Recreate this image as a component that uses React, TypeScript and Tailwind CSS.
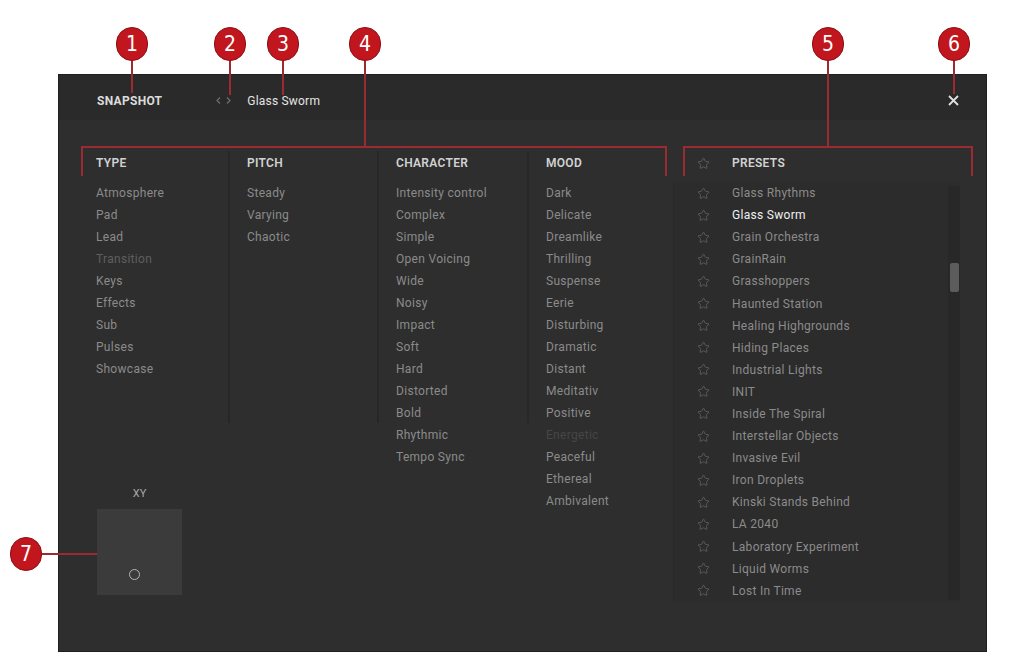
import { Star } from "lucide-react";

const type = ["Atmosphere", "Pad", "Lead", "Transition", "Keys", "Effects", "Sub", "Pulses", "Showcase"];
const pitch = ["Steady", "Varying", "Chaotic"];
const character = [
  "Intensity control",
  "Complex",
  "Simple",
  "Open Voicing",
  "Wide",
  "Noisy",
  "Impact",
  "Soft",
  "Hard",
  "Distorted",
  "Bold",
  "Rhythmic",
  "Tempo Sync",
];
const mood = [
  "Dark",
  "Delicate",
  "Dreamlike",
  "Thrilling",
  "Suspense",
  "Eerie",
  "Disturbing",
  "Dramatic",
  "Distant",
  "Meditativ",
  "Positive",
  "Energetic",
  "Peaceful",
  "Ethereal",
  "Ambivalent",
];
const presets = [
  "Glass Rhythms",
  "Glass Sworm",
  "Grain Orchestra",
  "GrainRain",
  "Grasshoppers",
  "Haunted Station",
  "Healing Highgrounds",
  "Hiding Places",
  "Industrial Lights",
  "INIT",
  "Inside The Spiral",
  "Interstellar Objects",
  "Invasive Evil",
  "Iron Droplets",
  "Kinski Stands Behind",
  "LA 2040",
  "Laboratory Experiment",
  "Liquid Worms",
  "Lost In Time",
];
const dim = ["Transition", "Energetic"];

const font = { fontFamily: "Roboto, 'Liberation Sans', Arial, sans-serif" };

function TagColumn({ title, items, first, width }: { title: string; items: string[]; first?: boolean; width: string }) {
  return (
    <div className={`${width} h-[272px] ${first ? "" : "border-l-2 border-[#272727]"} pl-[17px]`}>
      <div className="h-[24px] flex items-center text-[12px] font-semibold tracking-[0.3px] text-[#d2d2d2]">{title}</div>
      <div className="mt-[7px] flex flex-col">
        {items.map((t) => (
          <div
            key={t}
            className={`h-[22px] flex items-center text-[12px] tracking-[0.3px] whitespace-nowrap ${
              t === "Energetic" ? "text-[#464646]" : dim.includes(t) ? "text-[#5f5f5f]" : "text-[#8b8b8b]"
            }`}
          >
            {t}
          </div>
        ))}
      </div>
    </div>
  );
}

function Callout({ n, x, y }: { n: number; x: number; y: number }) {
  return (
    <div
      className="absolute w-[32px] h-[34px] -ml-[16px] -mt-[17px] rounded-full bg-[#c1161e] border border-[#8f0f15] flex items-center justify-center text-white text-[21px] leading-none"
      style={{ left: x, top: y, fontFamily: "'Liberation Sans Narrow', 'DejaVu Sans Condensed', Roboto, sans-serif" }}
    >
      {n}
    </div>
  );
}

export default function App() {
  return (
    <div className="relative w-[1024px] h-[662px] bg-white overflow-hidden" style={font}>
      <div className="pt-[74px] pl-[58px]">
        <div className="w-[929px] h-[578px] flex flex-col bg-[#2e2e2e] border border-[#1f1f1f]">
          {/* header */}
          <div className="h-[45px] flex items-center pt-[6px] pl-[38px] pr-[27px] bg-[#2a2a2a]">
            <span className="text-[12px] font-bold tracking-[0.3px] text-[#dcdcdc]">SNAPSHOT</span>
            <div className="ml-[54px] flex items-center gap-[5px]">
              <svg width="5" height="7" viewBox="0 0 5 7">
                <path d="M4 0.5 L1 3.5 L4 6.5" fill="none" stroke="#6e6e6e" strokeWidth="1.2" />
              </svg>
              <svg width="5" height="7" viewBox="0 0 5 7">
                <path d="M1 0.5 L4 3.5 L1 6.5" fill="none" stroke="#6e6e6e" strokeWidth="1.2" />
              </svg>
            </div>
            <span className="ml-[16px] text-[12px] tracking-[0.2px] text-[#e4e4e4]">Glass Sworm</span>
            <div className="ml-auto">
              <svg width="11" height="11" viewBox="0 0 11 11">
                <path d="M1 1 L10 10 M10 1 L1 10" stroke="#e0e0e0" strokeWidth="1.8" />
              </svg>
            </div>
          </div>

          {/* body */}
          <div className="flex pt-[31px]">
            <div className="flex flex-col pl-[20px]">
              <div className="flex">
                <TagColumn title="TYPE" items={type} first width="w-[149px]" />
                <TagColumn title="PITCH" items={pitch} width="w-[149px]" />
                <TagColumn title="CHARACTER" items={character} width="w-[150px]" />
                <TagColumn title="MOOD" items={mood} width="w-[138px]" />
              </div>
              <div className="mt-[64px] ml-[18px] w-[85px] flex flex-col items-center">
                <div className="h-[14px] flex items-center text-[11px] text-[#a8a8a8]">XY</div>
                <div className="relative mt-[8px] w-[85px] h-[86px] bg-[#3b3b3b]">
                  <div className="absolute left-[32px] top-[60px] w-[11px] h-[11px] rounded-full border-[1.5px] border-[#b5b5b5]" />
                </div>
              </div>
            </div>

            <div className="ml-[8px] w-[287px] flex flex-col">
              <div className="h-[24px] flex items-center pl-[12px]">
                <div className="w-[36px] flex justify-center">
                  <Star size={13} strokeWidth={1.4} color="#6a6a6a" />
                </div>
                <span className="pl-[11px] text-[12px] font-semibold tracking-[0.3px] text-[#d2d2d2]">PRESETS</span>
              </div>
              <div className="mt-[7px] flex bg-[#2c2c2c] border-l border-[#292929]">
                <div className="w-[274px] flex flex-col pl-[11px]">
                  {presets.map((p) => (
                    <div key={p} className="h-[22.1px] flex items-center">
                      <div className="w-[36px] flex justify-center">
                        <Star size={13} strokeWidth={1.4} color="#666666" />
                      </div>
                      <span
                        className={`pl-[11px] text-[12px] tracking-[0.3px] whitespace-nowrap ${
                          p === "Glass Sworm" ? "text-[#f0f0f0]" : "text-[#8b8b8b]"
                        }`}
                      >
                        {p}
                      </span>
                    </div>
                  ))}
                </div>
                <div className="mt-[4px] w-[12px] h-[414px] bg-[#282828] pt-[77px] flex justify-center">
                  <div className="w-[9px] h-[29px] rounded-[2px] bg-[#5c5c5c]" />
                </div>
              </div>
            </div>
          </div>
        </div>
      </div>

      {/* annotations */}
      <div className="absolute left-[131px] top-[60px] w-[2px] h-[33px] bg-[#9c2a30]" />
      <div className="absolute left-[229px] top-[60px] w-[2px] h-[35px] bg-[#9c2a30]" />
      <div className="absolute left-[282px] top-[60px] w-[2px] h-[35px] bg-[#9c2a30]" />
      <div className="absolute left-[364px] top-[60px] w-[2px] h-[88px] bg-[#9c2a30]" />
      <div className="absolute left-[81px] top-[146px] w-[586px] h-[30px] border-2 border-b-0 border-[#9c2a30]" />
      <div className="absolute left-[827px] top-[60px] w-[2px] h-[88px] bg-[#9c2a30]" />
      <div className="absolute left-[683px] top-[146px] w-[290px] h-[30px] border-2 border-b-0 border-[#9c2a30]" />
      <div className="absolute left-[953px] top-[60px] w-[2px] h-[34px] bg-[#9c2a30]" />
      <div className="absolute left-[40px] top-[553px] w-[57px] h-[2px] bg-[#9c2a30]" />

      <Callout n={1} x={132} y={44} />
      <Callout n={2} x={230} y={44} />
      <Callout n={3} x={283} y={44} />
      <Callout n={4} x={365} y={44} />
      <Callout n={5} x={828} y={44} />
      <Callout n={6} x={954} y={44} />
      <Callout n={7} x={26} y={554} />
    </div>
  );
}
